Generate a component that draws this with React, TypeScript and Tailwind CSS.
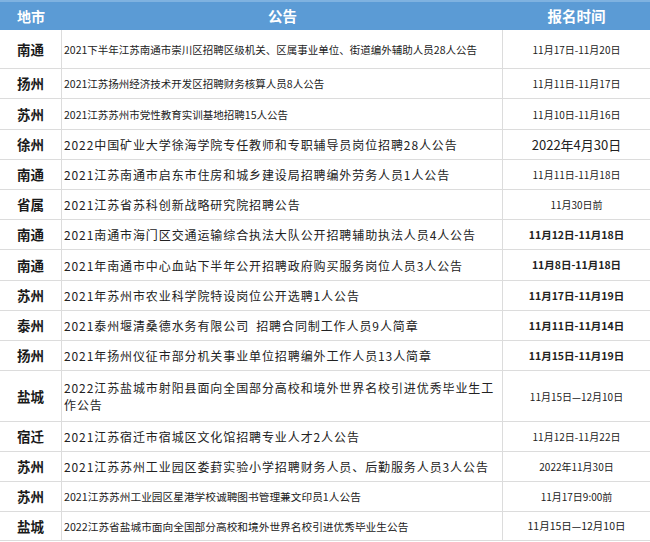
import React from "react";

type Row = {
  city: string;
  title: string;
  date: string;
  h: string;
  tCls: string;
  dCls: string;
};

const SMALL = "text-[10.5px] tracking-[0px]";
const BIG = "text-[12px] tracking-[0.9px]";
const D_NORM = "text-[10px] font-normal";
const D_BOLD = "text-[10.5px] font-bold";

const rows: Row[] = [
  { city: "南通", title: "2021下半年江苏南通市崇川区招聘区级机关、区属事业单位、街道编外辅助人员28人公告", date: "11月17日-11月20日", h: "h-[39px]", tCls: SMALL, dCls: D_NORM },
  { city: "扬州", title: "2021江苏扬州经济技术开发区招聘财务核算人员8人公告", date: "11月11日-11月17日", h: "h-[30px]", tCls: SMALL, dCls: D_NORM },
  { city: "苏州", title: "2021江苏苏州市党性教育实训基地招聘15人公告", date: "11月10日-11月16日", h: "h-[31px]", tCls: SMALL, dCls: D_NORM },
  { city: "徐州", title: "2022中国矿业大学徐海学院专任教师和专职辅导员岗位招聘28人公告", date: "2022年4月30日", h: "h-[30px]", tCls: BIG, dCls: "text-[13px] font-normal" },
  { city: "南通", title: "2021江苏南通市启东市住房和城乡建设局招聘编外劳务人员1人公告", date: "11月11日-11月18日", h: "h-[30px]", tCls: BIG, dCls: D_NORM },
  { city: "省属", title: "2021江苏省苏科创新战略研究院招聘公告", date: "11月30日前", h: "h-[30px]", tCls: BIG, dCls: D_NORM },
  { city: "南通", title: "2021南通市海门区交通运输综合执法大队公开招聘辅助执法人员4人公告", date: "11月12日-11月18日", h: "h-[30px]", tCls: BIG, dCls: D_BOLD },
  { city: "南通", title: "2021年南通市中心血站下半年公开招聘政府购买服务岗位人员3人公告", date: "11月8日-11月18日", h: "h-[31px]", tCls: BIG, dCls: D_BOLD },
  { city: "苏州", title: "2021年苏州市农业科学院特设岗位公开选聘1人公告", date: "11月17日-11月19日", h: "h-[30px]", tCls: BIG, dCls: D_BOLD },
  { city: "泰州", title: "2021泰州堰清桑德水务有限公司\u00a0\u00a0招聘合同制工作人员9人简章", date: "11月11日-11月14日", h: "h-[30px]", tCls: BIG, dCls: D_BOLD },
  { city: "扬州", title: "2021年扬州仪征市部分机关事业单位招聘编外工作人员13人简章", date: "11月15日-11月19日", h: "h-[30px]", tCls: BIG, dCls: D_BOLD },
  { city: "盐城", title: "2022江苏盐城市射阳县面向全国部分高校和境外世界名校引进优秀毕业生工作公告", date: "11月15日—12月10日", h: "h-[51px]", tCls: BIG, dCls: D_NORM },
  { city: "宿迁", title: "2021江苏宿迁市宿城区文化馆招聘专业人才2人公告", date: "11月12日-11月22日", h: "h-[30px]", tCls: BIG, dCls: D_NORM },
  { city: "苏州", title: "2021江苏苏州工业园区娄葑实验小学招聘财务人员、后勤服务人员3人公告", date: "2022年11月30日", h: "h-[30px]", tCls: BIG, dCls: D_NORM },
  { city: "苏州", title: "2021江苏苏州工业园区星港学校诚聘图书管理兼文印员1人公告", date: "11月17日9:00前", h: "h-[30px]", tCls: "text-[10.7px] tracking-[0px]", dCls: D_NORM },
  { city: "盐城", title: "2022江苏省盐城市面向全国部分高校和境外世界名校引进优秀毕业生公告", date: "11月15日—12月10日", h: "h-[29px]", tCls: "text-[10.7px] tracking-[0px]", dCls: "text-[10.5px] font-normal" },
];

export default function App() {
  return (
    <div
      className="w-[650px] h-[542px] overflow-hidden bg-white text-[#222]"
      style={{ fontFamily: '"Noto Sans CJK SC", "Noto Sans", sans-serif' }}
    >
      <div className="flex h-[30px] bg-[#5b9bd5] border-t-2 border-[#7fb2e0] text-white font-bold">
        <div className="w-[62px] flex items-center justify-center text-[14px]">地市</div>
        <div className="w-[441px] flex items-center justify-center text-[14.5px]">公告</div>
        <div className="flex-1 flex items-center justify-center text-[14.5px]">报名时间</div>
      </div>
      {rows.map((r, i) => (
        <div key={i} className={`flex ${r.h} border-b border-[#dcdcdc]`}>
          <div className="w-[62px] shrink-0 flex items-center justify-center border-r border-[#dcdcdc] text-[13.5px] font-bold text-[#1a1a1a]">
            {r.city}
          </div>
          <div className={`w-[441px] shrink-0 flex items-center pl-[2px] pr-[6px] border-r border-[#dcdcdc] leading-[17px] text-[#222] ${r.tCls}`}>
            <span>{r.title}</span>
          </div>
          <div className={`flex-1 flex items-center justify-center text-[#222] ${r.dCls}`}>
            {r.date}
          </div>
        </div>
      ))}
    </div>
  );
}
